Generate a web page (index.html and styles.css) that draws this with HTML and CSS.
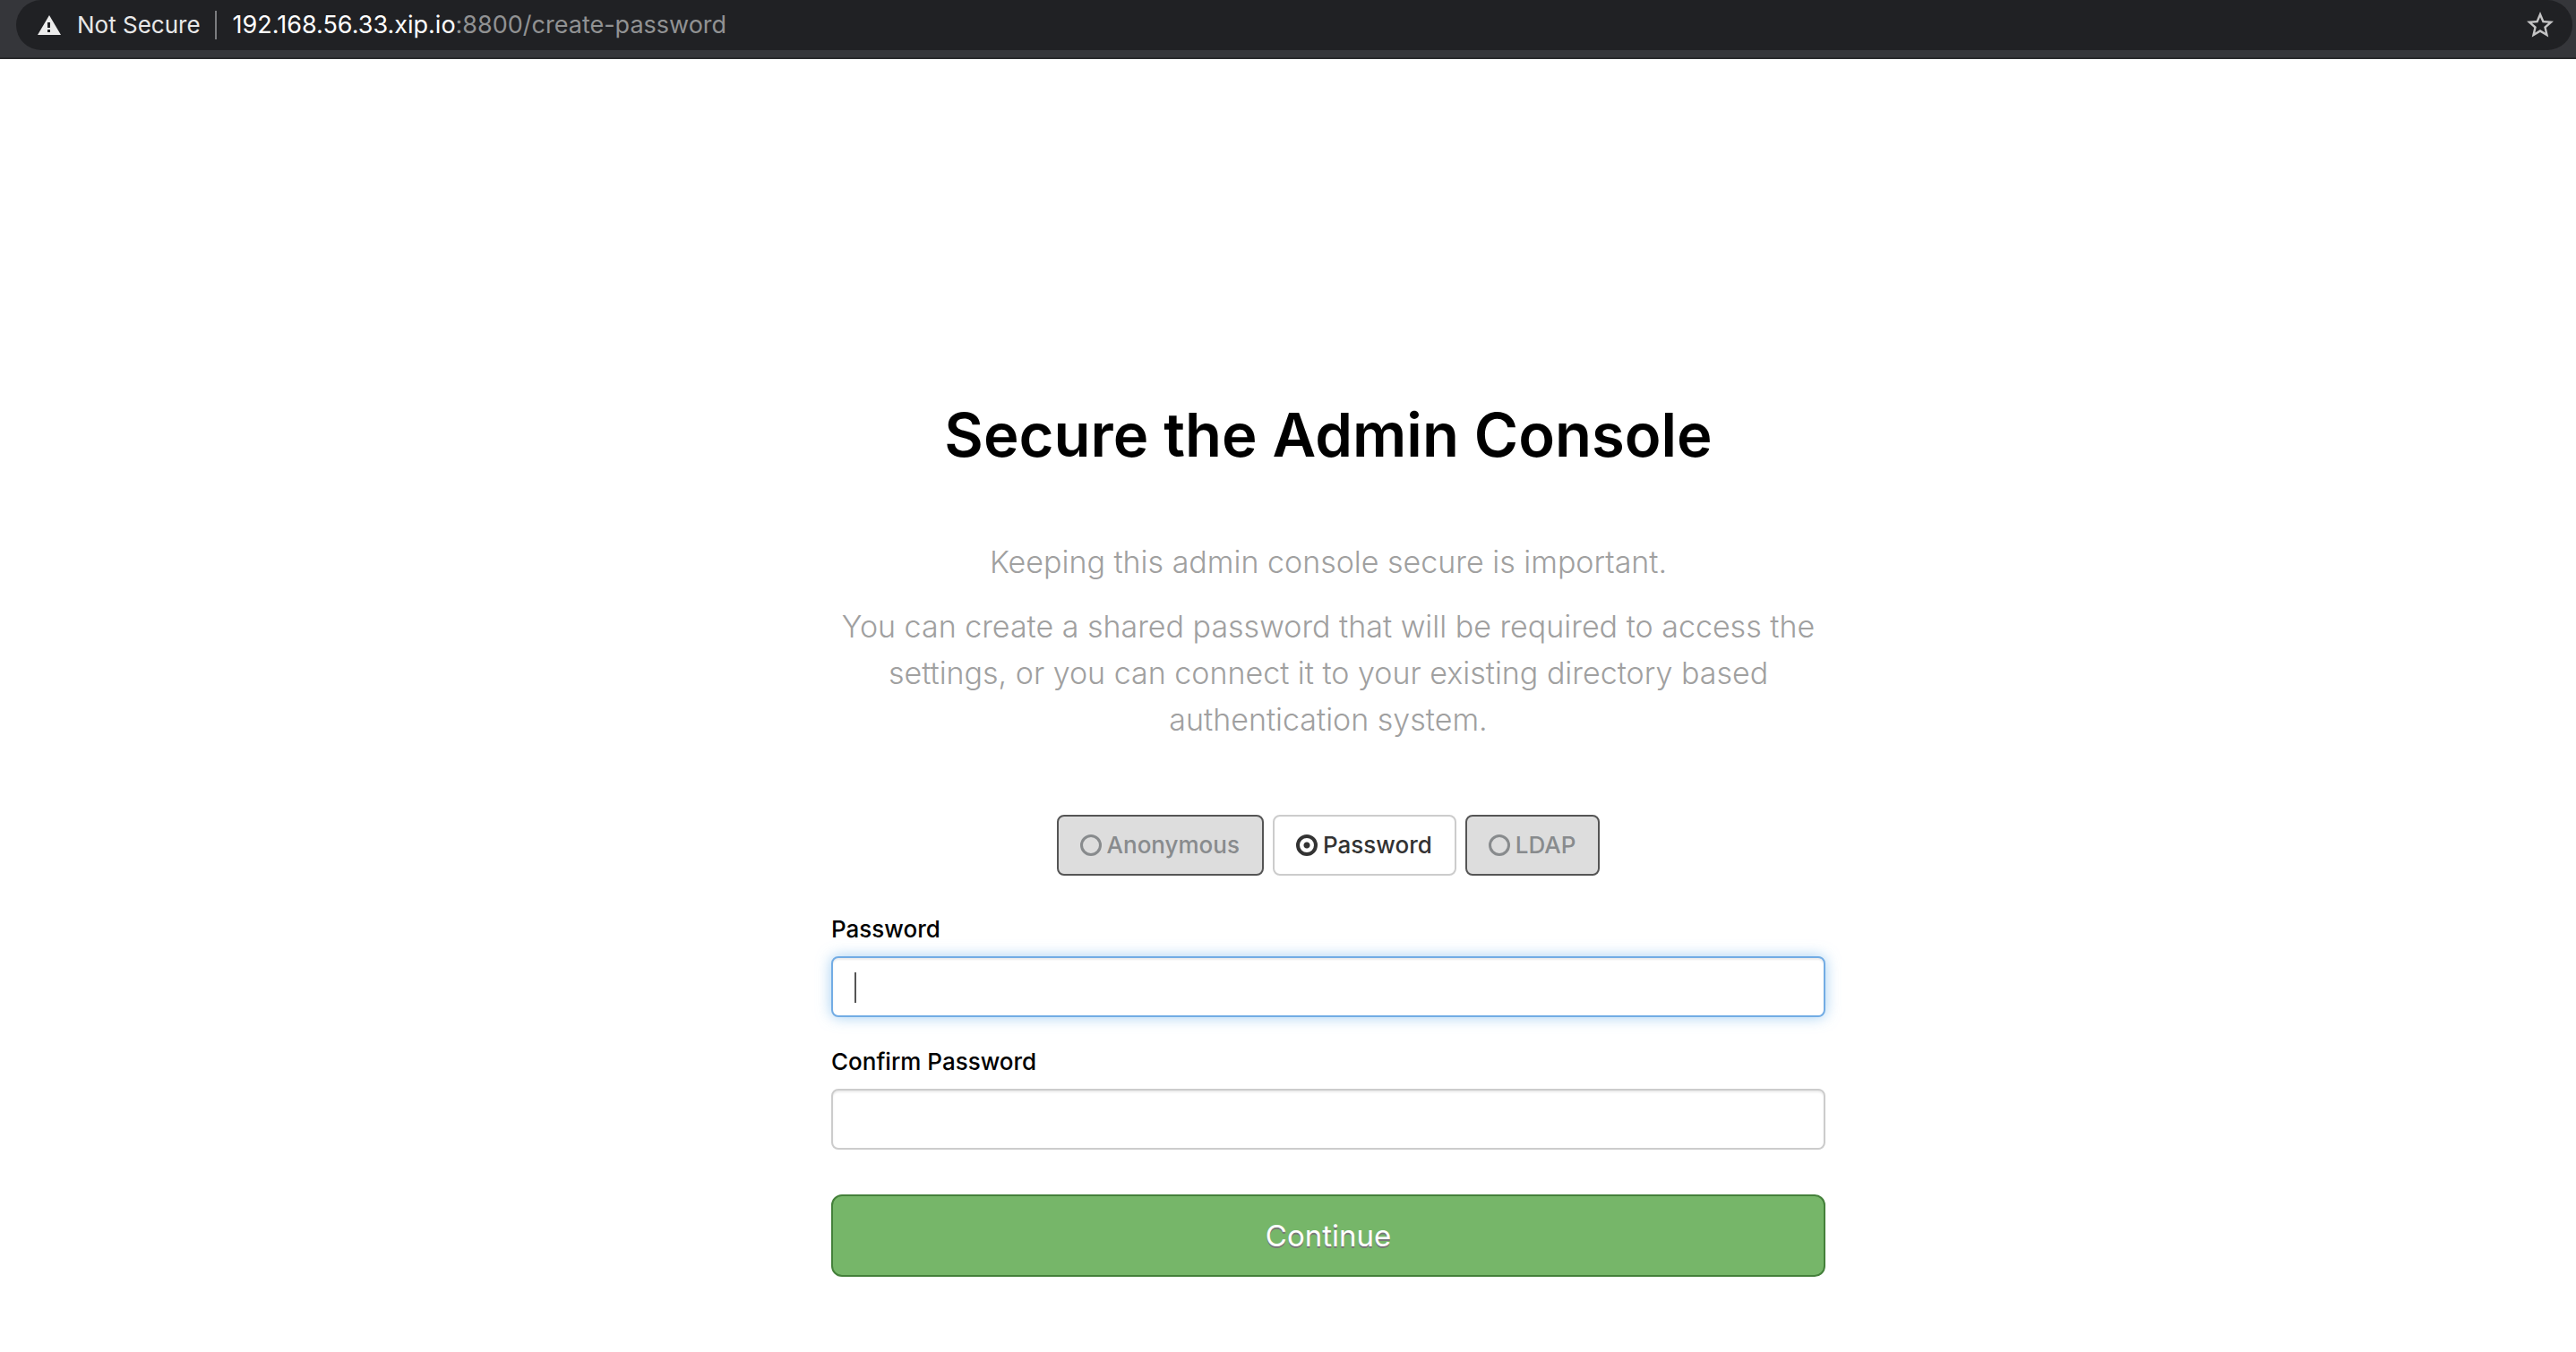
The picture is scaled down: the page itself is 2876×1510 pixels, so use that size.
FILE: index.html
```html
<!DOCTYPE html>
<html lang="en">
<head>
  <meta charset="utf-8">
  <title>Secure the Admin Console</title>
  <link rel="stylesheet" href="styles.css">
</head>
<body>
  <header class="toolbar">
    <div class="address-bar">
      <svg class="warning-icon" viewBox="0 0 26 22" aria-hidden="true">
        <path fill="#ececec" fill-rule="evenodd" d="M13 0L26 22H0zM11 8v6h3V8zM11 16v3h3v-3z"/>
      </svg>
      <span class="security">Not Secure</span>
      <span class="divider"></span>
      <span class="url"><span class="host">192.168.56.33.xip.io</span>:8800/create-password</span>
      <button class="bookmark" type="button" aria-label="Bookmark this page">
        <svg class="star-icon" viewBox="0 0 24 24" aria-hidden="true">
          <path fill="#c4c4c5" d="M22 9.24l-7.19-.62L12 2 9.19 8.63 2 9.24l5.46 4.73L5.82 21 12 17.27 18.18 21l-1.63-7.03L22 9.24zM12 15.4l-3.76 2.27 1-4.28-3.32-2.88 4.38-.38L12 6.1l1.71 4.04 4.38.38-3.32 2.88 1 4.28L12 15.4z"/>
        </svg>
      </button>
    </div>
  </header>

  <main class="page">
    <form class="panel">
      <h1 class="title">Secure the Admin Console</h1>
      <div class="intro">
        <p>Keeping this admin console secure is important.</p>
        <p>You can create a shared password that will be required to access the settings, or you can connect it to your existing directory based authentication system.</p>
      </div>

      <div class="methods" role="radiogroup" aria-label="Authentication method">
        <label class="method"><input class="radio" type="radio" name="method" value="anonymous">Anonymous</label>
        <label class="method method-selected"><input class="radio" type="radio" name="method" value="password" checked>Password</label>
        <label class="method"><input class="radio" type="radio" name="method" value="ldap">LDAP</label>
      </div>

      <div class="field">
        <label class="label" for="password">Password</label>
        <div class="control">
          <input class="input input-active" type="password" id="password">
          <span class="caret"></span>
        </div>
      </div>
      <div class="field">
        <label class="label" for="confirm">Confirm Password</label>
        <div class="control">
          <input class="input" type="password" id="confirm">
        </div>
      </div>

      <button class="submit" type="submit">Continue</button>
    </form>
  </main>
</body>
</html>
```
FILE: styles.css
```css
* {
  box-sizing: border-box;
}

body {
  margin: 0;
  background: #fff;
  color: #000;
  font-family: Inter, "Liberation Sans", sans-serif;
}

/* Browser bar */
.toolbar {
  padding: 0 4px 8px 18px;
  background: #35363a;
  border-bottom: 2px solid #28292b;
}

.address-bar {
  display: flex;
  align-items: center;
  height: 56px;
  padding: 0 18px 0 24px;
  border-radius: 28px;
  background: #202124;
  color: #919293;
  font-size: 27px;
  line-height: 36px;
}

.warning-icon {
  width: 26px;
  height: 22px;
  margin-right: 18px;
}

.security {
  color: #e8e8e8;
  font-size: 26px;
}

.divider {
  width: 2px;
  height: 32px;
  margin: 0 18px 0 16px;
  background: #7b7c7f;
}

.host {
  color: #fff;
}

.bookmark {
  display: flex;
  margin-left: auto;
  padding: 0;
  border: 0;
  background: none;
}

.star-icon {
  width: 36px;
  height: 36px;
}

/* Password form */
.page {
  padding: 380px 0 84px 90px;
}

.panel {
  max-width: 1110px;
  margin: 0 auto;
}

.title {
  margin: 0 0 76px;
  font-size: 67px;
  font-weight: 600;
  line-height: 80px;
  text-align: center;
}

.intro {
  display: grid;
  gap: 20px;
  margin-bottom: 80px;
  color: #a0a0a0;
  font-size: 34px;
  font-weight: 300;
  line-height: 52px;
  text-align: center;
}

.intro p {
  margin: 0;
}

.methods {
  display: flex;
  justify-content: center;
  gap: 10px;
  margin-bottom: 42px;
}

.method {
  display: flex;
  align-items: center;
  gap: 6px;
  height: 68px;
  padding: 0 25px 0 24px;
  border: 2px solid #555;
  border-radius: 8px;
  background: #ddd;
  color: #888b8d;
  font-size: 26px;
  font-weight: 500;
  line-height: 36px;
}

.method-selected {
  border-color: #ccc;
  background: #fff;
  color: #333;
}

.radio {
  appearance: none;
  width: 24px;
  height: 24px;
  margin: 0;
  border: 3px solid currentColor;
  border-radius: 50%;
  color: inherit;
}

.radio:checked {
  border-width: 4px;
  background: radial-gradient(circle, currentColor 3px, transparent 4px);
}

.field {
  margin-bottom: 32px;
}

.label {
  display: block;
  margin-bottom: 12px;
  font-size: 26px;
  font-weight: 500;
  line-height: 36px;
}

.control {
  position: relative;
}

.input {
  display: block;
  width: 100%;
  height: 68px;
  padding: 0 24px;
  border: 2px solid #ccc;
  border-radius: 8px;
  outline: 0;
  background: #fff;
  box-shadow: inset 0 2px 2px rgba(0, 0, 0, 0.08);
  font: inherit;
  font-size: 26px;
}

.input-active,
.input:focus {
  border-color: #72ace4;
  box-shadow: inset 0 2px 2px rgba(0, 0, 0, 0.08), 0 0 16px rgba(102, 175, 233, 0.6);
}

.caret {
  position: absolute;
  top: 18px;
  left: 26px;
  width: 2px;
  height: 34px;
  background: #555;
}

.submit {
  width: 100%;
  height: 92px;
  margin-top: 18px;
  border: 2px solid #44803a;
  border-radius: 12px;
  background: #76b669;
  color: #fff;
  font-family: inherit;
  font-size: 33px;
  line-height: 44px;
  text-shadow: 0 2px 0 #777;
}
```
